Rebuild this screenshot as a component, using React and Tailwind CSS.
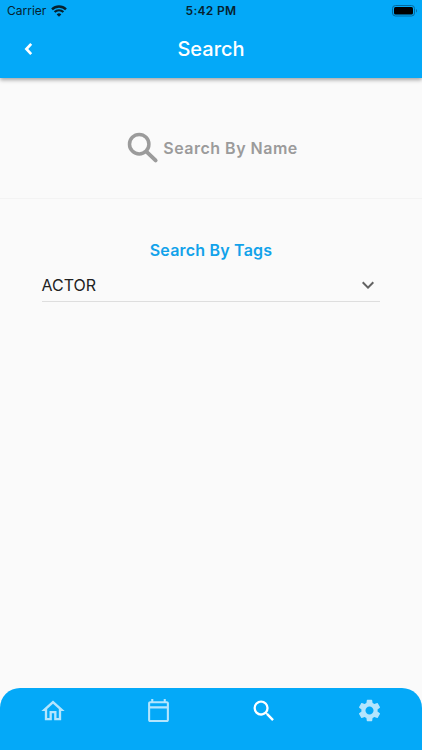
import React from "react";
import {
  MdExpandMore,
  MdOutlineCalendarToday,
  MdOutlineHome,
  MdSearch,
  MdSettings,
} from "react-icons/md";

function WifiIcon() {
  return (
    <svg width="16" height="12" viewBox="0 0 16 12" fill="none" stroke="#06222f">
      <path d="M1 4.4a9.9 9.9 0 0 1 14 0" strokeWidth="2.3" />
      <path d="M3.6 7.1a6.2 6.2 0 0 1 8.8 0" strokeWidth="2.2" />
      <path d="M8 11.8 5.7 9.4a3.3 3.3 0 0 1 4.6 0z" fill="#06222f" stroke="none" />
    </svg>
  );
}

function BatteryIcon() {
  return (
    <svg width="26" height="12" viewBox="0 0 26 12">
      <rect x="0.5" y="0.5" width="22" height="10.5" rx="3" fill="none" stroke="#04699d" />
      <rect x="2" y="2" width="19" height="7.5" rx="1.5" fill="#000" />
      <path d="M24 4v3.6c1.2-.5 1.2-3.1 0-3.6z" fill="#04699d" />
    </svg>
  );
}

function BackIcon() {
  return (
    <svg width="24" height="24" viewBox="0 0 24 24" fill="none" stroke="currentColor" strokeWidth="2.7">
      <path d="M15.2 6.8 10.4 12l4.8 5.2" />
    </svg>
  );
}

function SearchIcon() {
  return (
    <svg width="32" height="32" viewBox="0 0 32 32" fill="none" stroke="currentColor">
      <circle cx="12.2" cy="12.2" r="9.7" strokeWidth="3.5" />
      <path d="m20.2 20.4 8.4 8" strokeWidth="4" strokeLinecap="round" />
    </svg>
  );
}

function StatusBar() {
  return (
    <div className="grid h-[22px] grid-cols-3 items-center pr-1 pl-[7px] text-[#06222f]">
      <div className="flex items-center gap-[5px]">
        <span className="text-xs leading-none">Carrier</span>
        <WifiIcon />
      </div>
      <span className="mr-[3px] text-center text-xs leading-none font-semibold tracking-[0.3px]">5:42 PM</span>
      <div className="flex justify-end">
        <BatteryIcon />
      </div>
    </div>
  );
}

function Header() {
  return (
    <header className="relative h-[78px] bg-[#04a9f8] shadow-[0_2px_4px_rgba(0,0,0,0.35)]">
      <StatusBar />
      <div className="grid h-[54px] grid-cols-3 items-center text-white">
        <button aria-label="back" className="ml-4 w-6">
          <BackIcon />
        </button>
        <h1 className="text-center text-[20px] leading-none font-medium">Search</h1>
      </div>
    </header>
  );
}

const tabs = [
  { name: "home", Icon: MdOutlineHome, style: "h-7 w-7 text-[#b4e5fd]" },
  { name: "calendar", Icon: MdOutlineCalendarToday, style: "h-[25px] w-[25px] text-[#b4e5fd]" },
  { name: "search", Icon: MdSearch, style: "h-7 w-7 text-white" },
  { name: "settings", Icon: MdSettings, style: "h-[27px] w-[27px] text-[#b4e5fd]" },
];

function BottomNav() {
  return (
    <nav className="grid h-[62px] grid-cols-4 rounded-t-[20px] bg-[#04a9f8]">
      {tabs.map(({ name, Icon, style }) => (
        <button key={name} aria-label={name} className="flex h-[45px] items-center justify-center">
          <Icon className={style} />
        </button>
      ))}
    </nav>
  );
}

export default function App() {
  return (
    <div className="flex h-screen flex-col bg-[#fafafa] font-['Inter',sans-serif]">
      <Header />
      <main className="flex-1">
        <button className="flex h-[121px] w-full items-center justify-center gap-1 border-b border-[#f3f3f3] pt-5 pl-[3px] text-[#9b9b9b]">
          <SearchIcon />
          <span className="text-base leading-none font-semibold tracking-[0.5px]">Search By Name</span>
        </button>
        <section className="px-[42px] pt-[42px]">
          <h2 className="text-center text-base leading-[18px] font-semibold tracking-[0.2px] text-[#12a2ea]">
            Search By Tags
          </h2>
          <div className="mt-2.5 flex h-[33px] items-center justify-between border-b border-[#dedede]">
            <span className="-ml-px pl-[0.5px] text-base leading-none text-[#222]">ACTOR</span>
            <MdExpandMore className="h-6 w-6 text-[#626262]" />
          </div>
        </section>
      </main>
      <BottomNav />
    </div>
  );
}
